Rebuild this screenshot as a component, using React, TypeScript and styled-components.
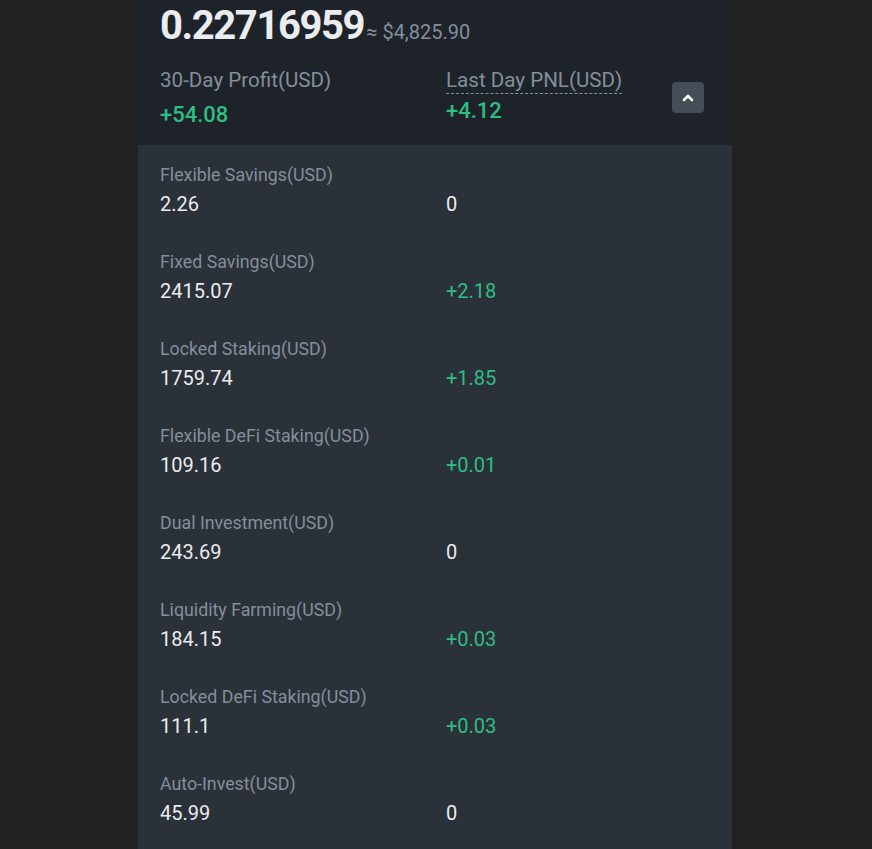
import React from 'react'
import styled, { createGlobalStyle } from 'styled-components'

const GlobalStyle = createGlobalStyle`
  html, body {
    margin: 0;
    padding: 0;
    background: #212121;
  }
  body {
    font-family: Roboto, 'Noto Sans', sans-serif;
    -webkit-font-smoothing: antialiased;
  }
`

const PAGE = styled.div`
  display: flex;
  min-height: 849px;
  padding-left: 138px;
`

const PANEL = styled.div`
  width: 594px;
  background: #2b3139;
  padding-bottom: 40px;
`

const HEADER = styled.div`
  background: #1e2329;
  padding: 2px 28px 0 22px;
  height: 145px;
  box-sizing: border-box;
`

const BALANCE = styled.div`
  display: flex;
  align-items: baseline;
  .amount {
    font-size: 40px;
    font-weight: 700;
    color: #eaecef;
    line-height: 48px;
    letter-spacing: -1.4px;
  }
  .approx {
    font-size: 20px;
    color: #848e9c;
    margin-left: 2px;
  }
`

const SUMMARY = styled.div`
  display: flex;
  align-items: flex-start;
  margin-top: 18px;
`

const SUMMARY_COL = styled.div<{ $first?: boolean }>`
  flex: ${({ $first }) => ($first ? '0 0 286px' : '1 1 auto')};
  display: flex;
  flex-direction: column;
  align-items: flex-start;
`

const SUMMARY_LABEL = styled.div<{ $dashed?: boolean }>`
  font-size: 20.6px;
  line-height: 25px;
  color: #848e9c;
  border-bottom: ${({ $dashed }) => ($dashed ? '1px dashed #848e9c' : '1px solid transparent')};
`

const SUMMARY_VALUE = styled.div<{ $offset?: number }>`
  font-size: 22px;
  font-weight: 500;
  line-height: 28px;
  color: #2ebd85;
  margin-top: ${({ $offset }) => $offset ?? 7}px;
`

const TOGGLE = styled.button`
  margin-top: 14px;
  width: 32px;
  height: 31px;
  flex-shrink: 0;
  border: none;
  border-radius: 4px;
  background: #474d57;
  display: flex;
  align-items: center;
  justify-content: center;
  padding: 0;
  cursor: pointer;
`

const ROW = styled.div`
  display: flex;
  padding: 18px 22px 14px;
`

const CELL = styled.div<{ $first?: boolean }>`
  flex: ${({ $first }) => ($first ? '0 0 286px' : '1 1 auto')};
  display: flex;
  flex-direction: column;
`

const LABEL = styled.div`
  font-size: 17.8px;
  line-height: 24px;
  color: #848e9c;
`

const VALUE = styled.div<{ $green?: boolean }>`
  font-size: 20px;
  line-height: 28px;
  margin-top: 3px;
  color: ${({ $green }) => ($green ? '#2ebd85' : '#eaecef')};
`

const rows = [
  { name: 'Flexible Savings(USD)', amount: '2.26', pnl: '0' },
  { name: 'Fixed Savings(USD)', amount: '2415.07', pnl: '+2.18' },
  { name: 'Locked Staking(USD)', amount: '1759.74', pnl: '+1.85' },
  { name: 'Flexible DeFi Staking(USD)', amount: '109.16', pnl: '+0.01' },
  { name: 'Dual Investment(USD)', amount: '243.69', pnl: '0' },
  { name: 'Liquidity Farming(USD)', amount: '184.15', pnl: '+0.03' },
  { name: 'Locked DeFi Staking(USD)', amount: '111.1', pnl: '+0.03' },
  { name: 'Auto-Invest(USD)', amount: '45.99', pnl: '0' },
]

const App = () => {
  return (
    <PAGE>
      <GlobalStyle />
      <PANEL>
        <HEADER>
          <BALANCE>
            <span className="amount">0.22716959</span>
            <span className="approx">≈ $4,825.90</span>
          </BALANCE>
          <SUMMARY>
            <SUMMARY_COL $first>
              <SUMMARY_LABEL>30-Day Profit(USD)</SUMMARY_LABEL>
              <SUMMARY_VALUE>+54.08</SUMMARY_VALUE>
            </SUMMARY_COL>
            <SUMMARY_COL>
              <SUMMARY_LABEL $dashed>Last Day PNL(USD)</SUMMARY_LABEL>
              <SUMMARY_VALUE $offset={3}>+4.12</SUMMARY_VALUE>
            </SUMMARY_COL>
            <TOGGLE>
              <svg width="14" height="14" viewBox="0 0 14 14">
                <polyline points="3,9 7,5 11,9" fill="none" stroke="#ffffff" strokeWidth="2.6" strokeLinecap="round" strokeLinejoin="round" />
              </svg>
            </TOGGLE>
          </SUMMARY>
        </HEADER>
        {rows.map((r) => (
          <ROW key={r.name}>
            <CELL $first>
              <LABEL>{r.name}</LABEL>
              <VALUE>{r.amount}</VALUE>
            </CELL>
            <CELL>
              <LABEL>&nbsp;</LABEL>
              <VALUE $green={r.pnl !== '0'}>{r.pnl}</VALUE>
            </CELL>
          </ROW>
        ))}
      </PANEL>
    </PAGE>
  )
}

export default App
